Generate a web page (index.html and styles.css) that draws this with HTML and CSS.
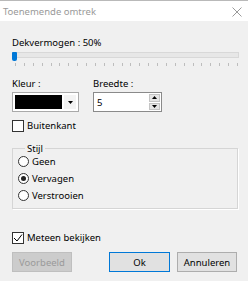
FILE: index.html
```html
<!DOCTYPE html>
<html lang="nl">
<head>
  <meta charset="UTF-8" />
  <meta name="viewport" content="width=device-width, initial-scale=1.0" />
  <title>Toenemende omtrek</title>
  <link rel="stylesheet" href="styles.css">
</head>
<body>

  <div class="window">
    <div class="titlebar">
      <span class="title">Toenemende omtrek</span>
      <svg class="close" width="10" height="10" viewBox="0 0 10 10">
        <path d="M0.5 0.5 L9.5 9.5 M9.5 0.5 L0.5 9.5" stroke="#9a9a9a" stroke-width="1" fill="none" />
      </svg>
    </div>

    <div class="content">
      <div class="label">Dekvermogen : 50%</div>
      <div class="slider">
        <div class="track"></div>
        <div class="thumb"></div>
      </div>
      <div class="ticks"></div>

      <div class="row">
        <div class="field">
          <div class="label">Kleur :</div>
          <div class="combo">
            <div class="swatch"></div>
            <div class="combo-btn">
              <svg width="5" height="3" viewBox="0 0 5 3"><path d="M0 0 L5 0 L2.5 3 Z" fill="#000" /></svg>
            </div>
          </div>
        </div>
        <div class="field">
          <div class="label">Breedte :</div>
          <div class="spin">
            <span class="spin-value">5</span>
            <div class="spin-btns">
              <div class="spin-btn">
                <svg width="5" height="3" viewBox="0 0 5 3"><path d="M0 3 L5 3 L2.5 0 Z" fill="#000" /></svg>
              </div>
              <div class="spin-btn">
                <svg width="5" height="3" viewBox="0 0 5 3"><path d="M0 0 L5 0 L2.5 3 Z" fill="#000" /></svg>
              </div>
            </div>
          </div>
        </div>
      </div>

      <div class="check check-outside">
        <span class="box"></span>
        <span>Buitenkant</span>
      </div>

      <fieldset class="group">
        <legend>Stijl</legend>
        <div class="radios">
          <div class="radio"><span class="dot"></span><span>Geen</span></div>
          <div class="radio"><span class="dot checked"></span><span>Vervagen</span></div>
          <div class="radio"><span class="dot"></span><span>Verstrooien</span></div>
        </div>
      </fieldset>

      <div class="check check-preview">
        <span class="box">
          <svg width="10" height="10" viewBox="0 0 10 10"><path d="M1 5 L4 8 L9 1.5" stroke="#000" stroke-width="1" fill="none" /></svg>
        </span>
        <span>Meteen bekijken</span>
      </div>

      <div class="buttons">
        <button class="btn" disabled>Voorbeeld</button>
        <div class="spacer"></div>
        <button class="btn btn-default">Ok</button>
        <button class="btn">Annuleren</button>
      </div>
    </div>
  </div>

</body>
</html>
```

FILE: styles.css
```css
* {
  box-sizing: border-box;
}

body {
  margin: 0;
  background: #f0f0f0;
  font-family: 'Noto Sans', 'Open Sans', sans-serif;
  font-size: 9.5px;
  line-height: 13px;
  color: #000;
}

.window {
  width: 248px;
  height: 281px;
  overflow: hidden;
}

.titlebar {
  display: flex;
  align-items: center;
  height: 21px;
  padding: 3px 6px 3px 3px;
  background: #fff;
  border-top: 1px solid #b9b9b9;
  color: #999;
}

.title {
  flex: 1;
}

.close {
  display: block;
  margin-top: 1px;
}

.content {
  padding: 15px 10px 0 12px;
}

/* slider */
.slider {
  position: relative;
  height: 9px;
  margin-top: 3px;
  margin-right: -1px;
}

.track {
  height: 6px;
  margin-top: 1px;
  background: #e7e7e7;
  border: 1px solid #d8d8d8;
}

.thumb {
  position: absolute;
  left: 0;
  top: 0;
  width: 5px;
  height: 9px;
  background: #0078d7;
  border-radius: 1px 1px 2px 2px;
}

.ticks {
  height: 3px;
  margin: 2px 0 0 3px;
  width: 223px;
  background: repeating-linear-gradient(to right, #bdbdbd 0 1px, transparent 1px 8.88px);
}

/* color + width */
.row {
  display: flex;
  gap: 14px;
  margin-top: 11px;
}

.combo {
  display: flex;
  width: 67px;
  height: 20px;
  margin-top: 2px;
  padding: 2px;
  background: #fff;
  border: 1px solid #a9a9a9;
}

.swatch {
  flex: 1;
  background: #000;
}

.combo-btn {
  display: flex;
  align-items: center;
  justify-content: center;
  width: 12px;
  margin-left: 2px;
  background: #f3f3f3;
}

.spin {
  display: flex;
  width: 69px;
  height: 20px;
  margin-top: 2px;
  padding: 1px;
  background: #fff;
  border: 1px solid #8a8a8a;
}

.spin-value {
  flex: 1;
  padding: 2px 0 0 2px;
}

.spin-btns {
  display: flex;
  flex-direction: column;
  gap: 1px;
  width: 11px;
}

.spin-btn {
  flex: 1;
  display: flex;
  align-items: center;
  justify-content: center;
  background: #e5e5e5;
  border: 1px solid #c4c4c4;
}

/* checkboxes */
.check {
  display: flex;
  align-items: center;
  gap: 3px;
  height: 13px;
}

.check-outside {
  margin-top: 7px;
}

.check-preview {
  margin-top: 22px;
}

.box {
  display: flex;
  align-items: center;
  justify-content: center;
  width: 12px;
  height: 12px;
  background: #fff;
  border: 1px solid #333;
}

/* group box */
.group {
  margin: 10px 0 0 0;
  padding: 0 4px 4px 5px;
  border: 1px solid #d5d5d5;
  box-shadow: 1px 1px 0 #fff;
  min-width: 0;
}

.group legend {
  padding: 0 2px;
  margin-left: 7px;
  line-height: 13px;
}

.radios {
  margin-top: -2px;
}

.radio {
  display: flex;
  align-items: center;
  gap: 3px;
  height: 17px;
}

.dot {
  display: flex;
  align-items: center;
  justify-content: center;
  width: 11px;
  height: 11px;
  border: 1px solid #333;
  border-radius: 50%;
  background: #fff;
}

.dot.checked::after {
  content: "";
  width: 5px;
  height: 5px;
  border-radius: 50%;
  background: #222;
}

/* buttons */
.buttons {
  display: flex;
  gap: 7px;
  margin: 8px 1px 0 0;
}

.spacer {
  flex: 1;
}

.btn {
  width: 60px;
  height: 20px;
  padding: 0;
  font-family: inherit;
  font-size: 9.5px;
  line-height: 13px;
  color: #000;
  background: #e1e1e1;
  border: 1px solid #adadad;
}

.btn-default {
  width: 61px;
  border-color: #0078d7;
}

.btn:disabled {
  background: #cccccc;
  border-color: #bfbfbf;
  color: #9a9a9a;
}
```
